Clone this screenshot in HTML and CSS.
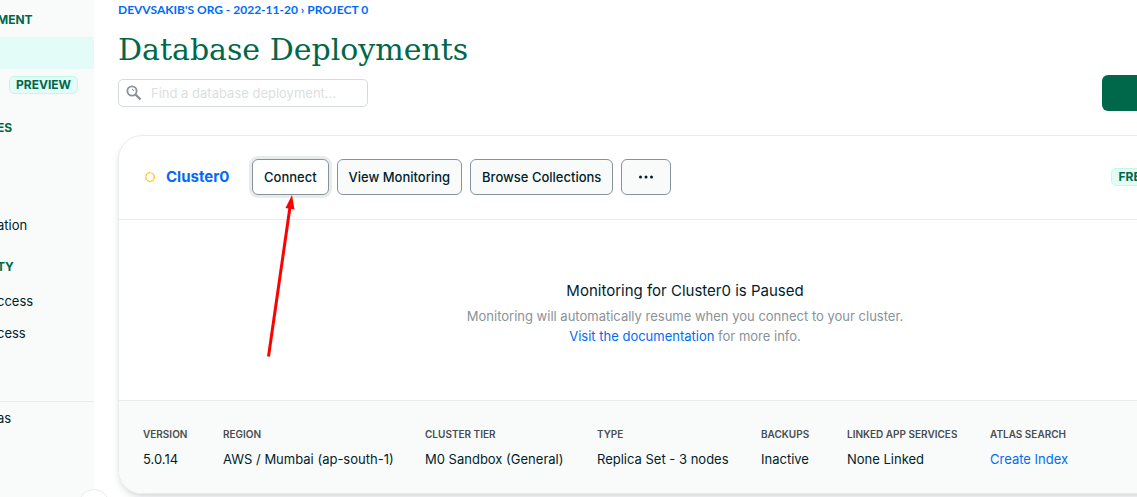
FILE: index.html
```html
<!DOCTYPE html>
<html lang="en">
<head>
<meta charset="utf-8">
<title>Database Deployments</title>
<link rel="stylesheet" href="styles.css">
</head>
<body>
<div class="app">
  <nav class="sidebar">
    <h2 class="side-title">MENT</h2>
    <div class="side-active"></div>
    <div class="side-preview"><span class="badge">PREVIEW</span></div>
    <h2 class="side-title side-services">ES</h2>
    <a class="side-link side-federation" href="#">ation</a>
    <h2 class="side-title side-security">TY</h2>
    <a class="side-link" href="#">ccess</a>
    <a class="side-link" href="#">cess</a>
    <div class="side-footer"><a class="side-link" href="#">as</a></div>
    <button class="collapse" type="button"></button>
  </nav>
  <main class="content">
    <div class="crumbs"><a href="#">DEVVSAKIB'S ORG - 2022-11-20</a> <span>›</span> <a href="#">PROJECT 0</a></div>
    <h1 class="title">Database Deployments</h1>
    <div class="toolbar">
      <label class="search">
        <svg width="16" height="16" viewBox="0 0 16 16"><circle cx="6" cy="6" r="4.6" fill="none" stroke="#889397" stroke-width="1.8"/><path d="M9.5 9.5l5 5" stroke="#889397" stroke-width="2.4"/><path d="M6 4.2a2 2 0 0 1 1.8 1.8" fill="none" stroke="#889397"/></svg>
        <input type="text" placeholder="Find a database deployment...">
      </label>
      <button class="create" type="button"></button>
    </div>
    <section class="card">
      <header class="card-head">
        <svg class="status" width="12" height="12" viewBox="0 0 12 12"><circle cx="6" cy="6" r="4.3" fill="none" stroke="#ffc010" stroke-width="1.2" stroke-dasharray="2.9 .48"/></svg>
        <a class="cluster" href="#">Cluster0</a>
        <div class="actions">
          <button class="btn focused" type="button">Connect</button>
          <button class="btn" type="button">View Monitoring</button>
          <button class="btn" type="button">Browse Collections</button>
          <button class="btn more" type="button"><svg width="16" height="16" viewBox="0 0 16 16" fill="#001e2b"><circle cx="2.5" cy="8" r="1.5"/><circle cx="8" cy="8" r="1.5"/><circle cx="13.5" cy="8" r="1.5"/></svg></button>
        </div>
        <span class="badge tier">FREE</span>
      </header>
      <div class="message">
        <h3>Monitoring for Cluster0 is Paused</h3>
        <p>Monitoring will automatically resume when you connect to your cluster.</p>
        <p><a href="#">Visit the documentation</a> for more info.</p>
      </div>
      <dl class="stats">
        <div><dt>VERSION</dt><dd>5.0.14</dd></div>
        <div><dt>REGION</dt><dd>AWS / Mumbai (ap-south-1)</dd></div>
        <div><dt>CLUSTER TIER</dt><dd>M0 Sandbox (General)</dd></div>
        <div><dt>TYPE</dt><dd>Replica Set - 3 nodes</dd></div>
        <div><dt>BACKUPS</dt><dd>Inactive</dd></div>
        <div><dt>LINKED APP SERVICES</dt><dd>None Linked</dd></div>
        <div><dt>ATLAS SEARCH</dt><dd><a href="#">Create Index</a></dd></div>
      </dl>
    </section>
  </main>
</div>
<svg class="arrow" width="32" height="164" viewBox="0 0 32 164"><path d="M4.5 161.5L26 12" stroke="#f00" stroke-width="3"/><path d="M28 0l2.5 14.5-9-1.5z" fill="#f00"/></svg>
</body>
</html>
```

FILE: styles.css
```css
* { box-sizing: border-box; }
body {
  margin: 0;
  overflow: hidden;
  font: 13px/20px Inter, "Liberation Sans", sans-serif;
  color: #001e2b;
  background: #fff;
}
h1, h2, h3, p, dl, dd { margin: 0; }
a { color: #016bf8; text-decoration: none; }
button, input { font: inherit; color: inherit; }
.app { display: flex; min-height: 100vh; overflow: hidden; }

.sidebar {
  position: relative;
  flex: 0 0 94px;
  padding-top: 10px;
  background: #f9fbfa;
}
.side-title {
  font-size: 12px;
  line-height: 20px;
  font-weight: 700;
  text-indent: -3px;
  color: #00684a;
}
.side-active { height: 32px; margin-top: 7px; background: #e3fcf7; }
.side-preview { display: flex; height: 32px; padding-left: 9px; align-items: center; }
.side-services { margin-top: 17px; }
.side-link { display: block; line-height: 32px; text-indent: -3px; color: #001e2b; }
.side-federation { margin-top: 71px; }
.side-security { margin: 16px 0 8px; }
.side-footer { margin-top: 52px; border-top: 1px solid #e8edeb; }
.collapse {
  position: absolute;
  right: -16px;
  bottom: -24px;
  width: 32px;
  height: 32px;
  border: 1px solid #e8edeb;
  border-radius: 50%;
  background: #fff;
}
.badge {
  padding: 0 6px;
  border: 1px solid #c0fae6;
  border-radius: 5px;
  background: #e3fcf7;
  font-size: 12px;
  line-height: 16px;
  font-weight: 700;
  color: #00684a;
}

.content { flex: 1 0 auto; width: calc(100% + 21px); padding-left: 24px; }
.crumbs { font: 700 12px/20px Lato, sans-serif; color: #016bf8; }
.title {
  margin-top: 10px;
  font: 400 30px/40px "DejaVu Serif", serif;
  color: #00684a;
}
.toolbar { display: flex; justify-content: space-between; align-items: center; margin-top: 5px; }
.search {
  display: flex;
  align-items: center;
  gap: 9px;
  width: 250px;
  height: 28px;
  padding: 0 7px;
  border: 1px solid #d5dadb;
  border-radius: 5px;
}
.search input { flex: 1; min-width: 0; padding: 0; border: 0; outline: 0; background: none; }
.search input::placeholder { color: #dcdfe0; opacity: 1; }
.create { width: 150px; height: 36px; border: 0; border-radius: 6px; background: #00684a; }

.card {
  margin-top: 24px;
  border: 1px solid #e8edeb;
  border-radius: 24px;
  overflow: hidden;
  box-shadow: 0 4px 10px -4px rgba(0, 30, 43, .3);
}
.card-head {
  display: flex;
  align-items: center;
  padding: 23px 96px 24px 25px;
  border-bottom: 1px solid #e8edeb;
}
.cluster { flex: 0 0 86px; margin-left: 10px; font-size: 15px; font-weight: 700; }
.actions { display: flex; gap: 8px; }
.btn {
  height: 36px;
  padding: 0 11px;
  border: 1px solid #889397;
  border-radius: 6px;
  background: #f9fbfa;
  font-weight: 500;
}
.focused { background: #fff; box-shadow: 0 0 0 3px #e8edeb; }
.more { display: flex; align-items: center; padding: 0 16px; }
.tier { margin-left: auto; }
.message { padding: 61px 0 54px; text-align: center; color: #889397; }
.message h3 { margin-bottom: 5px; font-size: 15px; font-weight: 400; color: #001e2b; }
.stats {
  display: grid;
  grid-template-columns: 80px 202px 172px 164px 86px 143px auto;
  padding: 23px 24px 24px;
  border-top: 1px solid #e8edeb;
  background: #f9fbfa;
}
.stats dt { font-size: 10px; font-weight: 600; color: #494d50; }
.stats dd { margin-top: 5px; white-space: nowrap; }

.arrow { position: absolute; left: 264px; top: 195px; pointer-events: none; }
```
